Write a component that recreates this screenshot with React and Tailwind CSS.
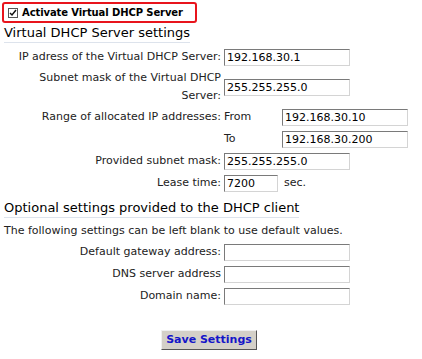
import React from "react";

const font = { fontFamily: '"DejaVu Sans", Verdana, sans-serif' };

function Field({ value = "", w = "w-[126px]" }) {
  return (
    <input
      readOnly
      value={value}
      className={`${w} h-[17px] border border-t-[#7a7a7a] border-l-[#7a7a7a] border-r-[#d4d4d4] border-b-[#d4d4d4] bg-white px-[2px] text-[11px] leading-[15px] text-black outline-none`}
      style={font}
    />
  );
}

function Row({ label, children, h = "h-[22px]" }) {
  return (
    <div className={`flex items-center ${h}`}>
      <div className="w-[224px] shrink-0 pr-[3px] text-right leading-[18px] whitespace-nowrap">{label}</div>
      <div className="flex items-center">{children}</div>
    </div>
  );
}

export default function App() {
  return (
    <div className="w-[422px] h-[359px] bg-white text-[11px] text-[#222] relative" style={font}>
      <div className="pt-[2px] pl-[2px]">
        <div className="w-[195px] h-[21px] border-2 border-[#e8141c] rounded-[3px] flex items-center pl-[4px]">
          <span className="w-[10px] h-[10px] border border-[#555] bg-white flex items-center justify-center mr-[4px] shrink-0">
            <svg width="8" height="8" viewBox="0 0 8 8"><path d="M1 4 L3 6 L7 1" stroke="#111" strokeWidth="1.5" fill="none" /></svg>
          </span>
          <span className="font-bold text-[10px] tracking-[-0.1px] text-black whitespace-nowrap">Activate Virtual DHCP Server</span>
        </div>
      </div>
      <div className="pl-[4px] pt-[2px]">
        <div className="inline-block text-[13px] leading-[16px] text-black border-b border-[#dde3ec] pb-[1px]">Virtual DHCP Server settings</div>
      </div>
      <div className="pt-[3px]">
        <Row label="IP adress of the Virtual DHCP Server:"><Field value="192.168.30.1" /></Row>
        <Row label={<>Subnet mask of the Virtual DHCP<br />Server:</>} h="h-[38px]"><Field value="255.255.255.0" /></Row>
        <Row label="Range of allocated IP addresses:">
          <span className="w-[58px]">From</span><Field value="192.168.30.10" />
        </Row>
        <Row label="">
          <span className="w-[58px]">To</span><Field value="192.168.30.200" />
        </Row>
        <Row label="Provided subnet mask:"><Field value="255.255.255.0" /></Row>
        <Row label="Lease time:"><Field value="7200" w="w-[54px]" /><span className="ml-[6px]">sec.</span></Row>
      </div>
      <div className="pl-[4px] pt-[6px]">
        <div className="inline-block text-[13px] leading-[16px] text-black border-b border-[#dde3ec] pb-[1px]">Optional settings provided to the DHCP client</div>
      </div>
      <div className="pl-[4px] pt-[6px] leading-[14px]">The following settings can be left blank to use default values.</div>
      <div className="pt-[3px]">
        <Row label="Default gateway address:"><Field /></Row>
        <Row label="DNS server address"><Field /></Row>
        <Row label="Domain name:"><Field /></Row>
      </div>
      <div className="flex justify-center pt-[23px] pr-[4px]">
        <button className="w-[96px] h-[20px] bg-[#d4d0c8] border border-t-[#f0f0f0] border-l-[#f0f0f0] border-r-[#555] border-b-[#555] text-[11px] font-bold text-[#1515c8]">Save Settings</button>
      </div>
    </div>
  );
}
